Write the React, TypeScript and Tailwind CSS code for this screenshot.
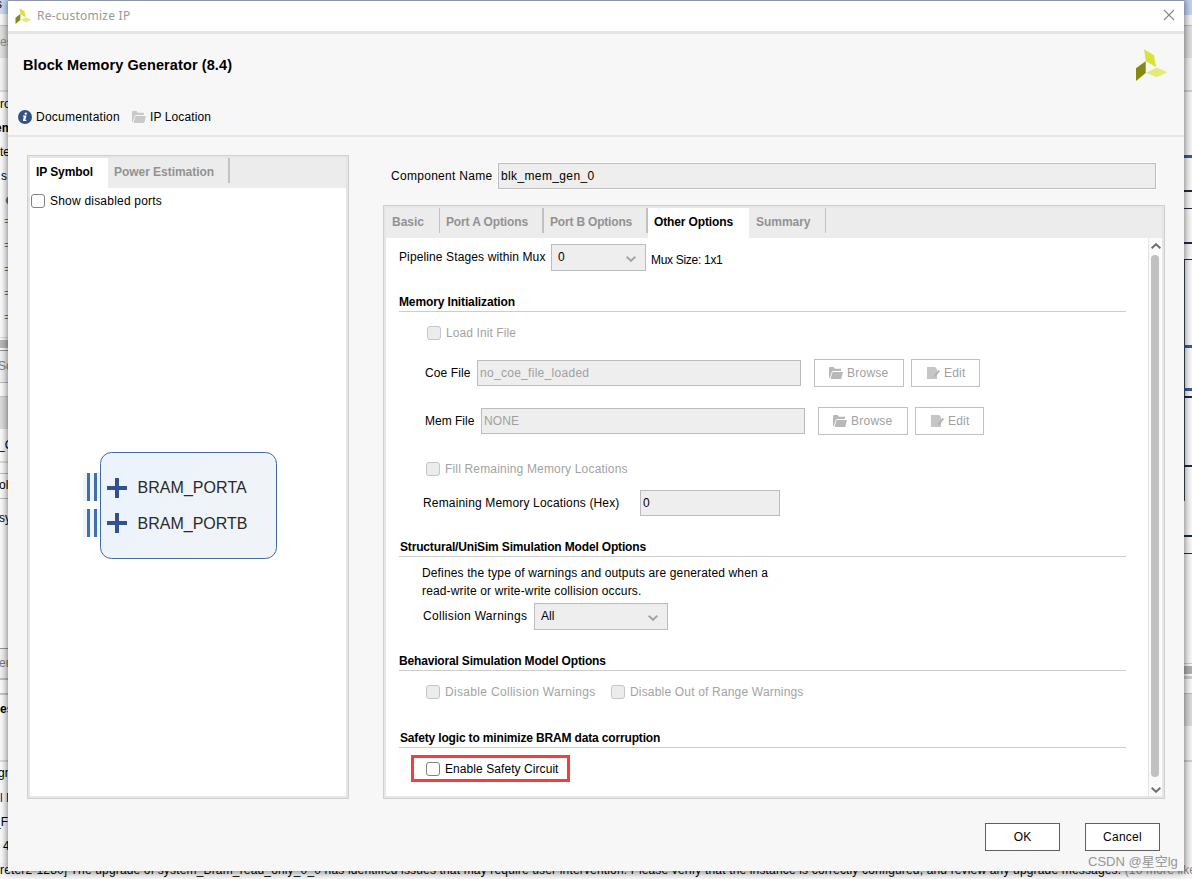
import type { ReactNode } from "react";

function Logo({ className }: { className: string }) {
  return (
    <svg viewBox="0 0 32 32" className={className}>
      <path d="M9 0.3 19 6.3 21.2 18.3 11 12.3Z" fill="#d7e23a" />
      <path d="M1 19.3 10.7 12.2V24L1 32Z" fill="#868810" />
      <path d="M11 23.7 21.7 18.6 32.5 23.3 21.7 28.3Z" fill="#e3ea79" />
    </svg>
  );
}

function FolderIcon({ className }: { className: string }) {
  return (
    <svg viewBox="0 0 14 12" className={className}>
      <path d="M0 11V1.2Q0 0 1.2 0H4.5L6 1.8H12V4H4.2Q3.2 4 2.8 5L.8 11Z" fill="currentColor" />
      <path d="M4.2 5H14L12.2 12H1.5L3.4 5.6Q3.6 5 4.2 5Z" fill="currentColor" />
    </svg>
  );
}

function EditIcon() {
  return (
    <svg viewBox="0 0 13 13" className="h-[13px] w-[13px] shrink-0">
      <path d="M0 0H8L10 2V12H0Z" fill="#c6c6c6" />
      <path d="M11.6 2.8 13 4.2 8.6 9.6 6.3 10.6 7 8.2Z" fill="#b4b4b4" />
    </svg>
  );
}

function Chevron({ up, className }: { up?: boolean; className: string }) {
  return (
    <svg viewBox="0 0 10 6" className={className} fill="none" stroke="currentColor" strokeWidth="2">
      <path d={up ? "M.6 5.2 5 1.2 9.4 5.2" : "M.6 .8 5 4.8 9.4 .8"} />
    </svg>
  );
}

function Check({ disabled, className, children }: { disabled?: boolean; className: string; children: ReactNode }) {
  return (
    <label className={`flex h-3.5 items-center gap-[5px] ${disabled ? "text-[#a3a3a3]" : "text-black"}`}>
      <span
        className={`h-3.5 w-3.5 shrink-0 rounded-[3px] border ${
          disabled ? "border-[#c6c6c6] bg-[#ebecee]" : "border-[#828282] bg-white"
        }`}
      />
      <span className={className}>{children}</span>
    </label>
  );
}

function Tab({ active, className, children }: { active?: boolean; className: string; children: ReactNode }) {
  return (
    <div
      className={`flex h-[30px] shrink-0 items-start pt-[5px] pl-1.5 font-bold leading-[18px] ${
        active ? "bg-white text-black" : "text-[#929292]"
      } ${className}`}
    >
      {children}
    </div>
  );
}

function Divider({ className }: { className: string }) {
  return <div className={`h-[25px] shrink-0 bg-[#c2c2c2] ${className}`} />;
}

function Section({ className, children }: { className: string; children: ReactNode }) {
  return (
    <h2 className={`ml-[13px] h-5 w-[727px] shrink-0 border-b border-[#cdcdcd] font-bold leading-[21px] ${className}`}>
      {children}
    </h2>
  );
}

function Field({ className, children }: { className: string; children: ReactNode }) {
  return (
    <div className={`flex h-[26px] shrink-0 items-center border border-[#bcbcbc] bg-[#eeeeee] pl-0.5 ${className}`}>
      <span className="-mt-px">{children}</span>
    </div>
  );
}

function Dropdown({ className, children }: { className: string; children: ReactNode }) {
  return (
    <div
      className={`flex h-[27px] shrink-0 items-center justify-between border border-[#bcbcbc] bg-[#eeeeee] pr-[9px] pl-1.5 ${className}`}
    >
      <span className="-mt-0.5">{children}</span>
      <Chevron className="mt-0.5 h-1.5 w-2.5 text-[#a5a5a5]" />
    </div>
  );
}

function FileButtons() {
  return (
    <>
      <button className="ml-[13px] flex h-7 w-[90px] items-center border border-[#c0c0c0] bg-white pl-3.5 text-[#a0a0a0]">
        <FolderIcon className="h-3 w-3.5 text-[#b8b8b8]" />
        <span className="ml-1 -mt-px tracking-[0.25px]">Browse</span>
      </button>
      <button className="ml-[7px] flex h-7 w-[69px] items-center border border-[#c0c0c0] bg-white pl-[15px] text-[#a0a0a0]">
        <EditIcon />
        <span className="ml-1 -mt-px tracking-[0.2px]">Edit</span>
      </button>
    </>
  );
}

const leftStrip: [string, string][] = [
  ["h-[14px] bg-[#cddcf8] -indent-1 leading-[8px]", "s"],
  ["h-[11px] bg-[#fafafa]", ""],
  ["h-px bg-[#c4c4c4]", ""],
  ["h-[32px] bg-[#e2e2e2] text-[#8c8c8c] leading-[32px]", "es"],
  ["h-[32px] bg-[#f6f6f6]", ""],
  ["h-[2px] bg-[#dcdcdc]", ""],
  ["h-[24px] leading-[24px]", "ro"],
  ["h-[24px] leading-[24px] font-bold -indent-[5px]", "em"],
  ["h-[24px] leading-[24px]", "te"],
  ["h-[24px] leading-[24px] pl-px", "s"],
  ["h-[24px] leading-[22px] pl-1 text-[20px] text-[#3c8290]", "●"],
  ["h-[24px] leading-[19px] pl-1 text-[#777]", "="],
  ["h-[24px] leading-[19px] pl-1 text-[#777]", "="],
  ["h-[24px] leading-[19px] pl-1 text-[#777]", "="],
  ["h-[24px] leading-[19px] pl-1 text-[#777]", "="],
  ["h-[29px] leading-[19px] pl-1 text-[#777]", "="],
  ["h-px bg-[#dcdcdc]", ""],
  ["h-[2px]", ""],
  ["h-[8px] bg-[#b9b9b9]", ""],
  ["h-[2px]", ""],
  ["h-px bg-[#969696]", ""],
  ["h-[31px] leading-[30px] bg-[#f1f1f1] text-[#828282] -indent-[2px]", "Sc"],
  ["h-px bg-[#bdbdbd]", ""],
  ["h-[13px]", ""],
  ["h-px bg-[#c8c8c8]", ""],
  ["h-[32px] bg-[#dcdcdc]", ""],
  ["h-[32px] leading-[32px] -indent-[2px]", "_C"],
  ["h-[2px] bg-[#dcdcdc]", ""],
  ["h-[10px]", ""],
  ["h-px bg-[#bdbdbd]", ""],
  ["h-[24px] leading-[23px] -indent-px", "oll"],
  ["h-px bg-[#bdbdbd]", ""],
  ["h-[38px] leading-[38px] -indent-px", "sy"],
  ["h-[111px]", ""],
  ["h-px bg-[#969696]", ""],
  ["h-[29px] leading-[28px] bg-[#f1f1f1] text-[#77778c] -indent-px", "er"],
  ["h-[2px] bg-[#c0c0c0]", ""],
  ["h-[13px]", ""],
  ["h-[2px] bg-[#c8c8c8]", ""],
  ["h-[29px] leading-[29px] font-bold", "es"],
  ["h-[36px]", ""],
  ["h-[2px] bg-[#dcdcdc]", ""],
  ["h-[24px] leading-[22px] -indent-[2px]", "gn"],
  ["h-[24px] leading-[24px] text-[#1c0a60]", "l M"],
  ["h-[24px] leading-[24px] -indent-[6px]", "_F"],
  ["h-[20px] leading-[24px] pl-[3px]", "4"],
];

const rightStrip: string[] = [
  "h-[15px] bg-[#c2d2f2]",
  "h-[10px] bg-[#f2f2f2]",
  "h-px bg-[#bdbdbd]",
  "h-[32px] bg-[#dedede]",
  "h-[32px] bg-[#f0f0f0]",
  "h-[2px] bg-[#cfcfcf]",
  "h-[63px] bg-[#f4f4f4]",
  "h-[3px] bg-[#3a5a96]",
  "h-[32px]",
  "h-[2px] bg-[#1d2c40]",
  "h-[16px]",
  "h-px bg-[#1d2c40]",
  "h-[33px]",
  "h-[2px] bg-[#1d2c40]",
  "h-[15px]",
  "h-px bg-[#1d2c40]",
  "h-[85px] border-l border-[#3a4656]",
  "h-[3px] bg-[#3a5a96]",
  "h-[40px] border-l border-[#3a4656]",
  "h-[3px] bg-[#3a5a96]",
  "h-[5px] border-l border-[#3a4656]",
  "h-[2px] bg-[#1d2c40]",
  "h-[67px] border-l border-[#3a4656]",
  "h-[2px] bg-[#1d2c40]",
  "h-[34px] border-l border-[#3a4656]",
  "h-[34px]",
  "h-[2px] bg-[#1d2c40]",
  "h-[16px]",
  "h-px bg-[#1d2c40]",
  "h-[109px]",
  "h-px bg-[#cccccc]",
  "h-[2px]",
  "h-[8px] bg-[#b0b0b0]",
  "h-[2px]",
  "h-[3px] bg-[#cccccc]",
  "h-[14px]",
  "h-px bg-[#bdbdbd]",
  "h-[32px] bg-[#dadada]",
  "h-[34px] bg-[#f4f4f4]",
  "h-[2px] bg-[#cfcfcf]",
  "h-[108px] bg-[#f4f4f4]",
];

function Backdrop() {
  return (
    <div className="flex h-full flex-col bg-white">
      <div className="flex h-[863px] shrink-0 justify-between">
        <div className="w-2 overflow-hidden bg-[#fbfbfb]">
          {leftStrip.map(([cls, text], i) => (
            <div key={i} className={`overflow-hidden whitespace-nowrap ${cls}`}>
              {text}
            </div>
          ))}
        </div>
        <div className="w-2 overflow-hidden bg-[#f8f8f8]">
          {rightStrip.map((cls, i) => (
            <div key={i} className={cls} />
          ))}
        </div>
      </div>
      <div className="h-4 whitespace-nowrap bg-[#f6f6f6] text-[12px] leading-[15px] tracking-[0.16px]">
        reter2-1280] The upgrade of system_Bram_read_only_0_0 has identified issues that may require user intervention.
        Please verify that the instance is correctly configured, and review any upgrade messages.
        <span className="text-[#8a8a8a]"> (16 more like</span>
      </div>
    </div>
  );
}

function SymbolDiagram() {
  return (
    <svg width="196" height="109" viewBox="82 451 196 109" className="mt-[243px] ml-[52px]">
      <defs>
        <linearGradient id="block" x1="0" y1="0" x2="1" y2="0.6">
          <stop offset="0.2" stopColor="#ecf3fd" />
          <stop offset="0.8" stopColor="#f0f4f8" />
        </linearGradient>
      </defs>
      <rect x="100.5" y="452.5" width="176" height="106" rx="11" fill="url(#block)" stroke="#4267a5" />
      {[473, 509].map((y) => (
        <g key={y}>
          <rect x="83" y={y} width="17" height="28" fill="#ecf4fd" />
          <rect x="87" y={y} width="3" height="28" fill="#426fa6" />
          <rect x="94" y={y} width="3" height="28" fill="#426fa6" />
        </g>
      ))}
      {[488, 523].map((y) => (
        <g key={y} fill="#33528d">
          <rect x="107" y={y - 2} width="20" height="4" />
          <rect x="115" y={y - 10} width="4" height="20" />
        </g>
      ))}
      <text x="137.5" y="493" fontSize="16" fill="#2a2a2a" className="tracking-[0.05px]">
        BRAM_PORTA
      </text>
      <text x="137.5" y="529" fontSize="16" fill="#2a2a2a">
        BRAM_PORTB
      </text>
    </svg>
  );
}

export default function App() {
  return (
    <div className="relative h-[879px] w-[1192px] overflow-hidden font-['Liberation_Sans',Arial,sans-serif] text-[12px] leading-[14px] text-black">
      <Backdrop />

      <div className="absolute top-0 left-2 flex h-[871px] w-[1176px] flex-col border-t border-[#8d96aa] bg-[#f7f7f7] shadow-[0_0_7px_1px_rgba(0,0,0,0.5)]">
        <div className="flex h-[30px] shrink-0 items-center bg-white">
          <Logo className="ml-[7px] -mt-px h-4 w-4 shrink-0" />
          <span className="ml-1.5 font-['Noto_Sans',sans-serif] text-[12px] tracking-[0.24px] text-[#999]">
            Re-customize IP
          </span>
          <svg viewBox="0 0 12 12" className="-mt-0.5 mr-[9px] ml-auto h-3 w-3" stroke="#8a8a8a" strokeWidth="1.1">
            <path d="M1 1 11 11M11 1 1 11" />
          </svg>
        </div>
        <div className="h-[3px] shrink-0 bg-[#e5e5e5]" />

        <header className="h-[101px] shrink-0">
          <div className="flex justify-between">
            <h1 className="mt-[22px] ml-[15px] text-[14.5px] leading-[18px] font-bold tracking-[0.1px]">
              Block Memory Generator (8.4)
            </h1>
            <Logo className="mt-[15px] mr-[17px] h-8 w-8" />
          </div>
          <div className="mt-[29px] ml-2.5 flex h-3.5 items-center">
            <svg viewBox="0 0 14 14" className="h-3.5 w-3.5">
              <circle cx="7" cy="7" r="7" fill="#344f8a" />
              <circle cx="7.8" cy="3.6" r="1.2" fill="#fff" />
              <path d="M5 5.6H8.5L7.4 10H8.6L8.3 11H4.8L5.9 6.6H4.8Z" fill="#fff" />
            </svg>
            <span className="ml-1 tracking-[0.25px]">Documentation</span>
            <FolderIcon className="ml-3 h-3 w-3.5 text-[#c9c9c9]" />
            <span className="ml-1 tracking-[0.11px]">IP Location</span>
          </div>
        </header>
        <div className="h-0.5 shrink-0 bg-[#e5e5e5]" />

        <div className="flex h-[662px] shrink-0">
          <aside className="mt-[18px] ml-[19px] h-[644px] w-[322px] border border-[#cfcfcf]">
            <div className="flex h-full flex-col border-2 border-[#e6e6e6] bg-white">
              <div className="flex bg-[#ececec]">
                <Tab active className="w-[78px] tracking-[-0.09px]">IP Symbol</Tab>
                <Tab className="w-[120px] tracking-[-0.04px]">Power Estimation</Tab>
                <Divider className="w-0.5" />
              </div>
              <div className="mt-1.5 ml-px">
                <Check className="tracking-[0.21px]">Show disabled ports</Check>
              </div>
              <SymbolDiagram />
            </div>
          </aside>

          <main className="ml-[34px] flex w-[782px] flex-col">
            <div className="mt-[26px] flex h-[26px] items-center pl-2">
              <span className="w-[107px] -mt-px tracking-[0.29px]">Component Name</span>
              <Field className="w-[658px] tracking-[0.37px] ring-1 ring-white">blk_mem_gen_0</Field>
            </div>

            <div className="mt-4 h-[594px] border border-[#cfcfcf]">
              <div className="flex h-full flex-col border-2 border-[#e6e6e6] bg-white">
                <div className="flex bg-[#ececec]">
                  <Tab className="w-[53px]">Basic</Tab>
                  <Divider className="w-px" />
                  <Tab className="w-[102px] tracking-[-0.13px]">Port A Options</Tab>
                  <Divider className="w-0.5" />
                  <Tab className="w-[102px] tracking-[-0.19px]">Port B Options</Tab>
                  <Divider className="w-0.5" />
                  <Tab active className="w-[101px] tracking-[-0.13px]">Other Options</Tab>
                  <Tab className="w-[76px] pl-[7px] tracking-[-0.04px]">Summary</Tab>
                  <Divider className="w-px" />
                </div>

                <div className="flex h-[558px]">
                  <div className="flex w-[762px] flex-col">
                    <div className="mt-1.5 ml-[13px] flex h-[27px] shrink-0 items-center">
                      <span className="-mt-px w-[152px] tracking-[0.12px]">Pipeline Stages within Mux</span>
                      <Dropdown className="w-[95px]">0</Dropdown>
                      <span className="mt-1 ml-[5px] tracking-[-0.3px]">Mux Size: 1x1</span>
                    </div>

                    <Section className="mt-[21px] tracking-[-0.13px]">Memory Initialization</Section>
                    <div className="mt-3.5 ml-[41px]">
                      <Check disabled className="tracking-[0.09px]">Load Init File</Check>
                    </div>
                    <div className="mt-[19px] ml-[39px] flex h-7 items-center">
                      <span className="-mt-px w-[52px] tracking-[0.1px]">Coe File</span>
                      <Field className="w-[324px] tracking-[0.29px] text-[#a0a0a0]">no_coe_file_loaded</Field>
                      <FileButtons />
                    </div>
                    <div className="mt-5 ml-[39px] flex h-7 items-center">
                      <span className="-mt-px w-14">Mem File</span>
                      <Field className="w-[324px] tracking-[0.08px] text-[#a0a0a0]">NONE</Field>
                      <FileButtons />
                    </div>
                    <div className="mt-[27px] ml-10">
                      <Check disabled className="tracking-[0.17px]">Fill Remaining Memory Locations</Check>
                    </div>
                    <div className="mt-3.5 ml-[37px] flex h-[26px] items-center">
                      <span className="w-[217px] tracking-[0.16px]">Remaining Memory Locations (Hex)</span>
                      <Field className="w-[140px]">0</Field>
                    </div>

                    <Section className="mt-[21px] pl-px tracking-[-0.16px]">
                      Structural/UniSim Simulation Model Options
                    </Section>
                    <p className="mt-[7px] ml-9 leading-[18px] tracking-[0.14px]">
                      Defines the type of warnings and outputs are generated when a<br />
                      read-write or write-write collision occurs.
                    </p>
                    <div className="mt-[3px] ml-[37px] flex h-[27px] items-center">
                      <span className="-mt-px w-[111px] tracking-[0.3px]">Collision Warnings</span>
                      <Dropdown className="w-[134px]">All</Dropdown>
                    </div>

                    <Section className="mt-[21px] tracking-[-0.17px]">Behavioral Simulation Model Options</Section>
                    <div className="mt-3.5 ml-10 flex">
                      <div className="w-[185px]">
                        <Check disabled className="tracking-[0.32px]">Disable Collision Warnings</Check>
                      </div>
                      <Check disabled className="tracking-[0.18px]">Disable Out of Range Warnings</Check>
                    </div>

                    <Section className="mt-[29px] pl-px tracking-[-0.16px]">
                      Safety logic to minimize BRAM data corruption
                    </Section>
                    <div className="mt-[7px] ml-[25px] flex h-[27px] w-[159px] items-center border-3 border-[#fb3b3b] pl-3">
                      <Check className="tracking-[0.07px]">Enable Safety Circuit</Check>
                    </div>
                  </div>

                  <div className="flex w-[13px] flex-col items-center border-l border-[#e4e4e4] bg-[#fafafa] pt-[5px] pb-[3px]">
                    <Chevron up className="ml-0.5 h-1.5 w-2.5 shrink-0 text-[#6f6f6f]" />
                    <div className="mt-1.5 w-2 grow rounded-full bg-[#c1c1c1]" />
                    <Chevron className="mt-[10px] ml-0.5 h-1.5 w-2.5 shrink-0 text-[#6f6f6f]" />
                  </div>
                </div>
              </div>
            </div>
          </main>
        </div>

        <footer className="mt-6 mr-6 flex justify-end gap-[25px]">
          <button className="h-7 w-[75px] border border-[#606060] bg-white">OK</button>
          <button className="h-7 w-[75px] border border-[#606060] bg-white tracking-[0.27px]">Cancel</button>
        </footer>
      </div>

      <div className="absolute top-[852px] left-[1088px] font-['Liberation_Sans','Noto_Sans_CJK_SC',sans-serif] text-[13px] leading-5 whitespace-nowrap text-[#969696]">
        CSDN @星空lg
      </div>
    </div>
  );
}
